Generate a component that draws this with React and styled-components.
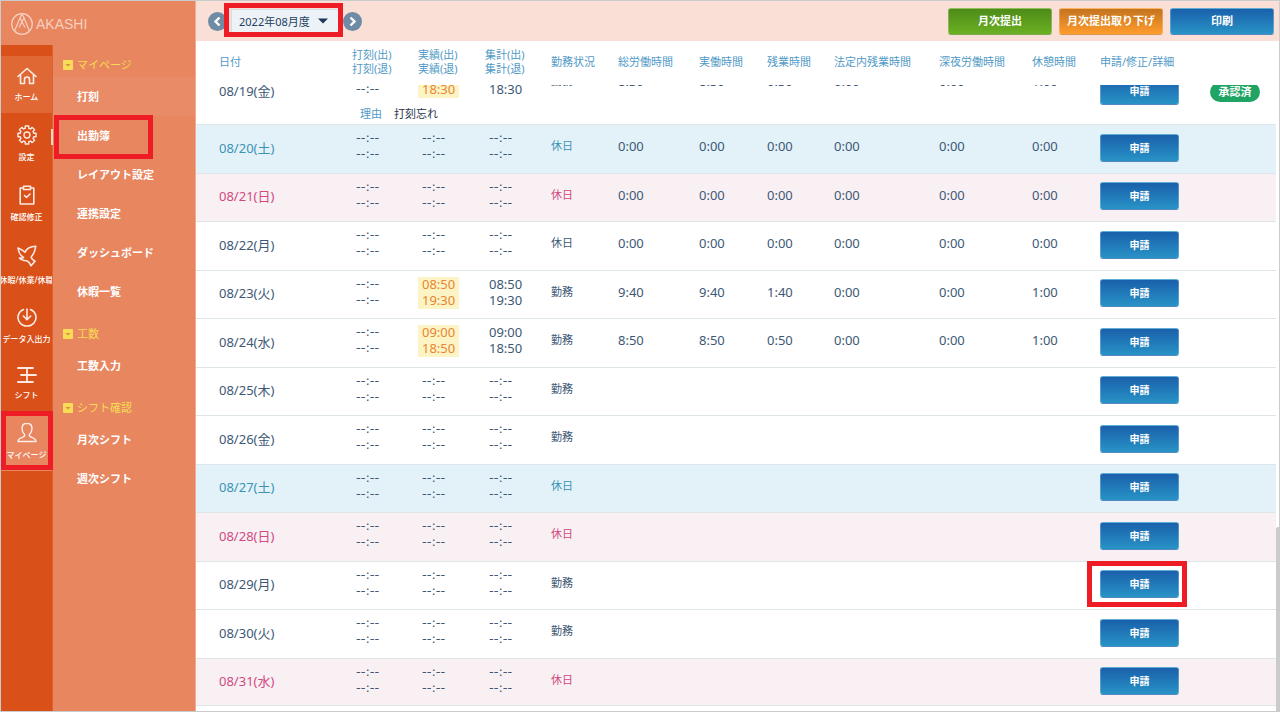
import React, { useLayoutEffect, useRef } from "react";
import styled, { createGlobalStyle, css } from "styled-components";

const GlobalStyle = createGlobalStyle`
  *, *::before, *::after { box-sizing: border-box; }
  html, body { margin: 0; padding: 0; height: 100%; }
  body {
    font-family: "Noto Sans", "Noto Sans CJK JP", sans-serif;
    font-size: 11px;
    line-height: 16px;
    color: #3d5875;
    background: #fff;
  }
  button, select { font-family: inherit; }
  ul { list-style: none; margin: 0; padding: 0; }
`;

const Shell = styled.div`
  display: flex;
  height: 100vh;
  border: 1px solid #c9cbcd;
  overflow: hidden;
`;

const Sidebar = styled.aside`
  flex: 0 0 195px;
  display: flex;
  flex-direction: column;
  background: #e7865f;
  border-right: 1px solid #f0ab91;
`;

const Brand = styled.a`
  display: flex;
  align-items: center;
  gap: 3px;
  height: 44px;
  padding: 2px 0 0 10px;
  font-family: "Liberation Sans", sans-serif;
  font-size: 14px;
  color: #f8d0c0;
  text-decoration: none;
`;

const SidebarBody = styled.div`
  flex: 1;
  display: flex;
  min-height: 0;
`;

const Rail = styled.nav`
  flex: 0 0 52px;
  min-width: 0;
  padding-top: 11px;
  background: #d95119;
  border-right: 1px solid #de6233;
`;

const RailItem = styled.li`
  position: relative;
`;

const RailLink = styled.a`
  display: flex;
  flex-direction: column;
  align-items: center;
  gap: 5px;
  padding: 10px 0;
  overflow: hidden;
  font-size: 8px;
  line-height: 12px;
  font-weight: 500;
  white-space: nowrap;
  color: #fff;
  text-decoration: none;
  background: ${(p) => p.$bg || "transparent"};
`;

const RailIcon = styled.span`
  display: flex;
  align-items: center;
  justify-content: center;
  height: ${(p) => p.$height}px;
`;

const RailMarker = styled.span`
  position: absolute;
  right: -1px;
  top: 16px;
  width: 2px;
  height: 16px;
  background: #f7d4c6;
`;

const Menu = styled.nav`
  flex: 1;
`;

const MenuSection = styled.section`
  & + & { margin-top: 3px; }
`;

const MenuHeading = styled.h2`
  display: flex;
  align-items: center;
  gap: 4px;
  height: 32px;
  margin: 0;
  padding: 8px 0 0 10px;
  font-size: 11px;
  font-weight: 400;
  color: #f9dc55;
`;

const MenuItem = styled.li`
  position: relative;
`;

const MenuLink = styled.a`
  display: flex;
  align-items: center;
  height: 39px;
  padding-left: 24px;
  font-size: 11px;
  font-weight: 700;
  color: #fff;
  text-decoration: none;
  background: ${(p) => (p.$hover ? "#e88b66" : "transparent")};
`;

const Ring = styled.span`
  position: absolute;
  inset: ${(p) => p.$inset};
  border: 5px solid #ee1c25;
  pointer-events: none;
`;

const Main = styled.main`
  flex: 1;
  min-width: 0;
  display: flex;
  flex-direction: column;
`;

const Toolbar = styled.header`
  flex: 0 0 40px;
  display: flex;
  align-items: center;
  justify-content: space-between;
  padding: 0 5px 0 12px;
  background: #fadfd6;
`;

const Group = styled.div`
  display: flex;
  align-items: center;
  gap: ${(p) => p.$gap}px;
`;

const RoundButton = styled.button`
  display: flex;
  align-items: center;
  justify-content: center;
  width: 19px;
  height: 19px;
  padding: 0;
  border: 0;
  border-radius: 50%;
  background: #708ba5;
`;

const MonthField = styled.div`
  position: relative;
  display: flex;
  align-items: center;
`;

const MonthSelect = styled.select`
  appearance: none;
  width: 108px;
  height: 24px;
  padding: 0 24px 0 7px;
  border: 1px solid #d3dbe3;
  border-radius: 0;
  font-size: 11px;
  color: #24405f;
  background: #edf2f6;
`;

const Caret = styled.svg`
  position: absolute;
  right: 11px;
  pointer-events: none;
`;

const tones = {
  green: css`background: linear-gradient(#4e8c17, #6bb024);`,
  orange: css`background: linear-gradient(#c4741f, #ff9c2c);`,
  blue: css`background: linear-gradient(#1a60ab, #2893c6);`,
};

const Button = styled.button`
  height: ${(p) => (p.$wide ? 27 : 28)}px;
  width: ${(p) => (p.$wide ? 104 : 79)}px;
  padding: 0;
  border: 1px solid rgba(255, 255, 255, 0.25);
  border-radius: 3px;
  font-size: ${(p) => (p.$wide ? 11 : 10)}px;
  line-height: 16px;
  font-weight: 700;
  white-space: nowrap;
  color: #fff;
  ${(p) => tones[p.$tone]}
`;

const TableArea = styled.div`
  flex: 1;
  min-height: 0;
  display: flex;
`;

const Scroller = styled.div`
  flex: 1;
  min-width: 0;
  overflow: auto;
  scrollbar-width: none;
  padding-bottom: 5px;
`;

const ScrollTrack = styled.div`
  flex: 0 0 3px;
  display: flex;
  flex-direction: column;
  justify-content: flex-end;
  background: #fff;
`;

const ScrollThumb = styled.div`
  height: 184px;
  border-radius: 2px 0 0 0;
  background: #cbcbcb;
`;

const Table = styled.table`
  width: 100%;
  table-layout: fixed;
  border-collapse: separate;
  border-spacing: 0;
`;

const HeadCell = styled.th`
  position: sticky;
  top: 0;
  z-index: 1;
  height: 44px;
  padding: 0 0 2px ${(p) => (p.$first ? 23 : 0)}px;
  font-size: 11px;
  line-height: 14px;
  font-weight: 400;
  text-align: left;
  white-space: nowrap;
  color: #529ac6;
  background: #fff;
`;

const dayTones = {
  sat: { bg: "#e3f2f9", ink: "#3b93b4" },
  sun: { bg: "#f9f0f4", ink: "#d04a80" },
};

const Cell = styled.td`
  padding: ${(p) => p.$top || 0}px 0 ${(p) => p.$bottom || 0}px ${(p) => p.$left || 0}px;
  vertical-align: ${(p) => (p.$top ? "top" : "middle")};
  border-top: 1px solid #dfe6ea;
  white-space: nowrap;
  color: ${(p) => p.$ink || "#3d5875"};
  font-size: ${(p) => (p.$small ? 11 : 13)}px;
`;

const Row = styled.tr`
  height: 49px;
  background: ${(p) => p.$bg || "#fff"};
  &:nth-child(even) { height: 48px; }
  &:last-child > td { border-bottom: 1px solid #dfe6ea; }
`;

const NoteRow = styled.tr`
  height: 16px;
`;

const NoteCell = styled.td`
  padding: 0 0 5px 8px;
  font-size: 11px;
  line-height: 11px;
  color: #24344a;
`;

const NoteLabel = styled.span`
  margin-right: 12px;
  color: #529ac6;
`;

const TimePair = styled.div`
  display: inline-block;
  min-width: 41px;
  height: 32px;
  padding-left: 4px;
  vertical-align: top;
  color: ${(p) => (p.$edited ? "#e98532" : "#3d5875")};
  background: ${(p) => (p.$edited ? "#fcf4c4" : "transparent")};
`;

const Time = styled.span`
  display: block;
  height: 16px;
  line-height: 14px;
  font-size: 13px;
  font-family: ${(p) => (p.$blank ? '"DejaVu Sans", sans-serif' : "inherit")};
`;

const ActionBox = styled.div`
  position: relative;
  display: inline-block;
  vertical-align: middle;
  height: 28px;
`;

const Badge = styled.span`
  display: inline-block;
  width: 50px;
  height: 20px;
  border-radius: 10px;
  vertical-align: middle;
  font-size: 11px;
  line-height: 19px;
  font-weight: 700;
  text-align: center;
  color: #fff;
  background: #20a464;
`;

const Stroke = ({ w, h, children, sw = 1.4 }) => (
  <svg width={w} height={h} viewBox={`0 0 ${w} ${h}`} fill="none" stroke="#fff" strokeOpacity="0.88"
    strokeWidth={sw} strokeLinejoin="round" strokeLinecap="round" aria-hidden="true">
    {children}
  </svg>
);

const gearPath = (() => {
  const points = [];
  for (let i = 0; i < 8; i += 1) {
    const mid = (i * Math.PI) / 4;
    [[-0.26, 7], [-0.19, 9.2], [0.19, 9.2], [0.26, 7]].forEach(([d, r]) => {
      points.push(`${(10 + r * Math.sin(mid + d)).toFixed(2)} ${(10 - r * Math.cos(mid + d)).toFixed(2)}`);
    });
  }
  return `M${points.join("L")}Z`;
})();

const icons = {
  home: (
    <Stroke w={20} h={18} sw={1.6}>
      <path d="M1 9.500 10 1.500l9 8M3.500 7.500v9h4v-4a2.500 2.500 0 0 1 5 0v4h4v-9" />
    </Stroke>
  ),
  gear: (
    <Stroke w={20} h={20}>
      <path d={gearPath} />
      <circle cx="10" cy="10" r="3" />
    </Stroke>
  ),
  check: (
    <Stroke w={16} h={20} sw={1.6}>
      <path d="M4.500 3H1.200v16h13.600V3h-3.300M4.500 1.200h7v3.300h-7zM5.500 10.500l2 2 3.500-3.500" />
    </Stroke>
  ),
  bird: (
    <Stroke w={20} h={22} sw={1.6}>
      <path d="M1 3c2 .8 4.500 2 7 4.200C9.500 3.500 12.500 1.500 18.800 1.200c-.5 3.500-1.300 7-4.300 10.300-.8 1.500.3 2.800 3.500 4.800l-4 4.500c-1-2.500-2-4.300-4.500-5-3-.3-5.500-1-7-2.800 1.500.3 2.800.2 4-.5C3.500 10.500 1.500 7.500 1 3z" />
    </Stroke>
  ),
  data: (
    <Stroke w={20} h={19} sw={1.6}>
      <path d="M6.500 1.500a9 8.600 0 1 0 7 0M10 1v10.500M6.300 8l3.700 3.600L13.700 8" />
    </Stroke>
  ),
  shift: (
    <Stroke w={20} h={18} sw={1.8}>
      <path d="M1 2h15M4 9h15M1 16h15M10 2v14" />
    </Stroke>
  ),
  person: (
    <Stroke w={20} h={21}>
      <path d="M10 1.200c-3.300 0-5 2.300-5 5.300 0 2.500 1 4.500 2.600 6 .4 1.500-.3 2.200-1.800 2.700-2.500.8-4.500 1.500-4.800 4.300h18c-.3-2.800-2.300-3.500-4.800-4.300-1.500-.5-2.200-1.200-1.800-2.700C14 11 15 9 15 6.500c0-3-1.700-5.300-5-5.300z" />
    </Stroke>
  ),
};

const railItems = [
  { label: "ホーム", icon: "home", height: 20, bg: "#df6835" },
  { label: "設定", icon: "gear", height: 23, marker: true },
  { label: "確認修正", icon: "check", height: 23 },
  { label: "休暇/休業/休職", icon: "bird", height: 26 },
  { label: "データ入出力", icon: "data", height: 22 },
  { label: "シフト", icon: "shift", height: 19 },
  { label: "マイページ", icon: "person", height: 23, bg: "#e7865f", ring: true },
];

const menuSections = [
  { title: "マイページ", items: ["打刻", "出勤簿", "レイアウト設定", "連携設定", "ダッシュボード", "休暇一覧"] },
  { title: "工数", items: ["工数入力"] },
  { title: "シフト確認", items: ["月次シフト", "週次シフト"] },
];

const columnWidths = [156, 66, 67, 66, 67, 81, 68, 67, 105, 93, 68, 110, 66];

const headings = [
  ["日付"], ["打刻(出)", "打刻(退)"], ["実績(出)", "実績(退)"], ["集計(出)", "集計(退)"],
  ["勤務状況"], ["総労働時間"], ["実働時間"], ["残業時間"], ["法定内残業時間"],
  ["深夜労働時間"], ["休憩時間"], ["申請/修正/詳細"], [],
];

const blank = "--:--";
const zero = ["0:00", "0:00", "0:00", "0:00", "0:00", "0:00"];

const days = [
  { date: "08/19(金)", status: "勤務", punches: ["", blank], times: ["", "18:30"], values: ["8:30", "8:30", "0:30", "0:00", "0:00", "1:00"], note: "打刻忘れ", badge: "承認済" },
  { date: "08/20(土)", status: "休日", tone: "sat", values: zero },
  { date: "08/21(日)", status: "休日", tone: "sun", values: zero },
  { date: "08/22(月)", status: "休日", values: zero },
  { date: "08/23(火)", status: "勤務", times: ["08:50", "19:30"], values: ["9:40", "9:40", "1:40", "0:00", "0:00", "1:00"] },
  { date: "08/24(水)", status: "勤務", times: ["09:00", "18:50"], values: ["8:50", "8:50", "0:50", "0:00", "0:00", "1:00"] },
  { date: "08/25(木)", status: "勤務" },
  { date: "08/26(金)", status: "勤務" },
  { date: "08/27(土)", status: "休日", tone: "sat" },
  { date: "08/28(日)", status: "休日", tone: "sun" },
  { date: "08/29(月)", status: "勤務", ring: true },
  { date: "08/30(火)", status: "勤務" },
  { date: "08/31(水)", status: "休日", tone: "sun" },
];

function Times({ pair = [blank, blank], edited }) {
  return (
    <TimePair $edited={edited}>
      {pair.map((t, i) => <Time key={i} $blank={t === blank}>{t}</Time>)}
    </TimePair>
  );
}

function DayRow({ day }) {
  const tone = dayTones[day.tone] || {};
  const span = day.note ? 2 : 1;
  const values = day.values || ["", "", "", "", "", ""];
  return (
    <>
      <Row $bg={tone.bg}>
        <Cell $left={23} $bottom={3} $ink={tone.ink} rowSpan={span}>{day.date}</Cell>
        <Cell $top={6}><Times pair={day.punches} /></Cell>
        <Cell $top={6}><Times pair={day.times} edited={Boolean(day.times)} /></Cell>
        <Cell $top={6}><Times pair={day.times} /></Cell>
        <Cell $top={13} $small $ink={tone.ink}>{day.status}</Cell>
        {values.map((v, i) => <Cell key={i} $top={13}>{v}</Cell>)}
        <Cell $bottom={3} rowSpan={span}>
          <ActionBox>
            <Button type="button" $tone="blue">申請</Button>
            {day.ring && <Ring $inset="-9px -8px -9px -13px" />}
          </ActionBox>
        </Cell>
        <Cell rowSpan={span}>{day.badge && <Badge>{day.badge}</Badge>}</Cell>
      </Row>
      {day.note && (
        <NoteRow>
          <NoteCell colSpan={10}><NoteLabel>理由</NoteLabel>{day.note}</NoteCell>
        </NoteRow>
      )}
    </>
  );
}

function Chevron({ d }) {
  return (
    <svg width="11" height="11" viewBox="0 0 11 11" fill="none" stroke="#fff" strokeWidth="2.4" aria-hidden="true">
      <path d={d} />
    </svg>
  );
}

export default function App() {
  const scroller = useRef(null);

  useLayoutEffect(() => {
    scroller.current.scrollTop = scroller.current.scrollHeight;
  }, []);

  return (
    <>
      <GlobalStyle />
      <Shell>
        <Sidebar>
          <Brand href="#">
            <svg width="22" height="22" viewBox="0 0 22 22" fill="none" stroke="#f8d0c0" strokeWidth="1.200" aria-hidden="true">
              <circle cx="11" cy="11" r="10.300" />
              <path d="M3.500 18 9 5l5 9.500M18.500 18 13 5 8 14.500M9 5l2-4 2 4" />
            </svg>
            AKASHI
          </Brand>
          <SidebarBody>
            <Rail>
              <ul>
                {railItems.map((r) => (
                  <RailItem key={r.label}>
                    <RailLink href="#" $bg={r.bg}>
                      <RailIcon $height={r.height}>{icons[r.icon]}</RailIcon>
                      {r.label}
                    </RailLink>
                    {r.marker && <RailMarker />}
                    {r.ring && <Ring $inset="0 -1px 1px 0" />}
                  </RailItem>
                ))}
              </ul>
            </Rail>
            <Menu>
              {menuSections.map((s) => (
                <MenuSection key={s.title}>
                  <MenuHeading>
                    <svg width="10" height="10" viewBox="0 0 10 10" aria-hidden="true">
                      <rect width="10" height="10" rx="1" fill="#f9dc55" />
                      <path d="M2.500 4h5L5 6.500z" fill="#d98a4a" />
                    </svg>
                    {s.title}
                  </MenuHeading>
                  <ul>
                    {s.items.map((item) => (
                      <MenuItem key={item}>
                        <MenuLink href="#" $hover={item === "打刻"}>{item}</MenuLink>
                        {item === "出勤簿" && <Ring $inset="-1px 42px -4px 1px" />}
                      </MenuItem>
                    ))}
                  </ul>
                </MenuSection>
              ))}
            </Menu>
          </SidebarBody>
        </Sidebar>
        <Main>
          <Toolbar>
            <Group $gap={4}>
              <RoundButton type="button" aria-label="前の月"><Chevron d="M7.500 1.500l-4 4 4 4" /></RoundButton>
              <MonthField>
                <MonthSelect aria-label="対象月" defaultValue="2022-08">
                  <option value="2022-08">2022年08月度</option>
                </MonthSelect>
                <Caret width="10" height="6" viewBox="0 0 10 6" aria-hidden="true">
                  <path d="M0 .5h10L5 5.500z" fill="#1d3557" />
                </Caret>
                <Ring $inset="-6px -4px -4px -7px" />
              </MonthField>
              <RoundButton type="button" aria-label="次の月"><Chevron d="M3.500 1.500l4 4-4 4" /></RoundButton>
            </Group>
            <Group $gap={7}>
              <Button type="button" $wide $tone="green">月次提出</Button>
              <Button type="button" $wide $tone="orange">月次提出取り下げ</Button>
              <Button type="button" $wide $tone="blue">印刷</Button>
            </Group>
          </Toolbar>
          <TableArea>
            <Scroller ref={scroller}>
              <Table>
                <colgroup>
                  {columnWidths.map((w, i) => <col key={i} width={w} />)}
                </colgroup>
                <thead>
                  <tr>
                    {headings.map((lines, i) => (
                      <HeadCell key={i} scope="col" $first={i === 0}>
                        {lines.map((line) => <div key={line}>{line}</div>)}
                      </HeadCell>
                    ))}
                  </tr>
                </thead>
                <tbody>
                  {days.map((day) => <DayRow key={day.date} day={day} />)}
                </tbody>
              </Table>
            </Scroller>
            <ScrollTrack><ScrollThumb /></ScrollTrack>
          </TableArea>
        </Main>
      </Shell>
    </>
  );
}
